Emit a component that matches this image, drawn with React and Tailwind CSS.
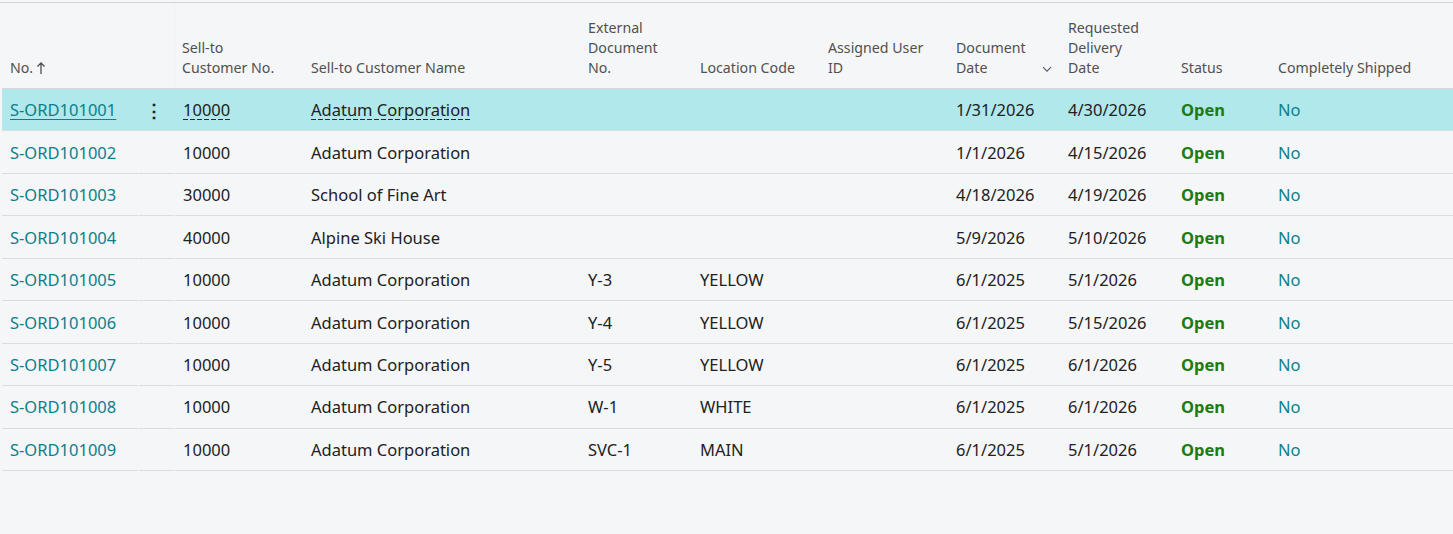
import React from "react";

const rows = [
  ["S-ORD101001", "10000", "Adatum Corporation", "", "", "", "1/31/2026", "4/30/2026"],
  ["S-ORD101002", "10000", "Adatum Corporation", "", "", "", "1/1/2026", "4/15/2026"],
  ["S-ORD101003", "30000", "School of Fine Art", "", "", "", "4/18/2026", "4/19/2026"],
  ["S-ORD101004", "40000", "Alpine Ski House", "", "", "", "5/9/2026", "5/10/2026"],
  ["S-ORD101005", "10000", "Adatum Corporation", "Y-3", "YELLOW", "", "6/1/2025", "5/1/2026"],
  ["S-ORD101006", "10000", "Adatum Corporation", "Y-4", "YELLOW", "", "6/1/2025", "5/15/2026"],
  ["S-ORD101007", "10000", "Adatum Corporation", "Y-5", "YELLOW", "", "6/1/2025", "6/1/2026"],
  ["S-ORD101008", "10000", "Adatum Corporation", "W-1", "WHITE", "", "6/1/2025", "6/1/2026"],
  ["S-ORD101009", "10000", "Adatum Corporation", "SVC-1", "MAIN", "", "6/1/2025", "5/1/2026"],
];

const grid =
  "grid grid-cols-[137px_36px_128px_277px_112px_128px_128px_112px_113px_97px_1fr]";

const dashed =
  "bg-[repeating-linear-gradient(to_right,#2a2a2a_0_5px,transparent_5px_7px)] bg-[length:100%_1px] bg-[position:0_calc(100%-3px)] bg-no-repeat";

function Chevron() {
  return (
    <svg width="12" height="12" viewBox="0 0 12 12" className="mb-[3px]">
      <path d="M2 4.2 L6 8.2 L10 4.2" fill="none" stroke="#505c6e" strokeWidth="1.2" />
    </svg>
  );
}

function Arrow() {
  return (
    <svg width="10" height="14" viewBox="0 0 10 14" className="ml-[3px] mb-[3px]">
      <path d="M5 13 V2 M1.5 5.5 L5 2 L8.5 5.5" fill="none" stroke="#505050" strokeWidth="1.3" />
    </svg>
  );
}

export default function App() {
  return (
    <div
      className="w-[1453px] h-[534px] bg-[#f5f6f8] overflow-hidden"
      style={{ fontFamily: '"Noto Sans", "Open Sans", sans-serif' }}
    >
      <div className="mt-[2px] border-t border-[#d4d4d4]" />
      <div className="pl-[2px]">
        {/* Header */}
        <div className={`${grid} h-[86px] text-[14.2px] leading-[20px] text-[#505050]`}>
          <div className="col-span-2 flex items-end pl-[8px] pb-[10px] border-b border-[#d6d6d6] border-r border-r-[#f0f1f3]">
            <span>No.</span>
            <Arrow />
          </div>
          <div className="flex items-end pl-[7px] pb-[10px] border-b border-[#d6d6d6]">
            <span>Sell-to<br />Customer No.</span>
          </div>
          <div className="flex items-end pl-[8px] pb-[10px] border-b border-[#d6d6d6]">
            <span>Sell-to Customer Name</span>
          </div>
          <div className="flex items-end pl-[8px] pb-[10px] border-b border-[#d6d6d6]">
            <span>External<br />Document<br />No.</span>
          </div>
          <div className="flex items-end pl-[8px] pb-[10px] border-b border-[#d6d6d6]">
            <span>Location Code</span>
          </div>
          <div className="flex items-end pl-[8px] pb-[10px] border-b border-[#d6d6d6]">
            <span>Assigned User<br />ID</span>
          </div>
          <div className="flex items-end justify-between pl-[8px] pr-[7px] pb-[10px] border-b border-[#d6d6d6]">
            <span>Document<br />Date</span>
            <Chevron />
          </div>
          <div className="flex items-end pl-[8px] pb-[10px] border-b border-[#d6d6d6]">
            <span>Requested<br />Delivery<br />Date</span>
          </div>
          <div className="flex items-end pl-[8px] pb-[10px] border-b border-[#d6d6d6]">
            <span>Status</span>
          </div>
          <div className="flex items-end pl-[8px] pb-[10px] border-b border-[#d6d6d6]">
            <span>Completely Shipped</span>
          </div>
        </div>

        {/* Rows */}
        {rows.map((r, i) => {
          const sel = i === 0;
          const cell = "flex items-center pl-[8px] pt-[2px] border-b border-[#dcdcdc]";
          return (
            <div
              key={r[0]}
              className={`${grid} h-[42.44px] text-[16.5px] text-[#212121] ${sel ? "bg-[#b1e8eb]" : ""}`}
            >
              <div className={`${cell} mr-px`}>
                <span className={`text-[#0b808c] ${sel ? "underline underline-offset-[3px] decoration-[1px]" : ""}`}>
                  {r[0]}
                </span>
              </div>
              <div className="flex items-center justify-center pt-[1px] border-b border-[#dcdcdc] mr-px">
                {sel && <span className="text-[#212121] text-[18px] leading-none font-bold pr-[6px]">⋮</span>}
              </div>
              <div className={cell}>
                <span className={sel ? dashed : ""}>{r[1]}</span>
              </div>
              <div className={cell}>
                <span className={sel ? dashed : ""}>{r[2]}</span>
              </div>
              <div className={cell}>{r[3]}</div>
              <div className={cell}>{r[4]}</div>
              <div className={cell}>{r[5]}</div>
              <div className={cell}>{r[6]}</div>
              <div className={cell}>{r[7]}</div>
              <div className={cell}>
                <span className="font-bold text-[#207a10]">Open</span>
              </div>
              <div className={cell}>
                <span className="text-[#0b808c]">No</span>
              </div>
            </div>
          );
        })}
      </div>
    </div>
  );
}
